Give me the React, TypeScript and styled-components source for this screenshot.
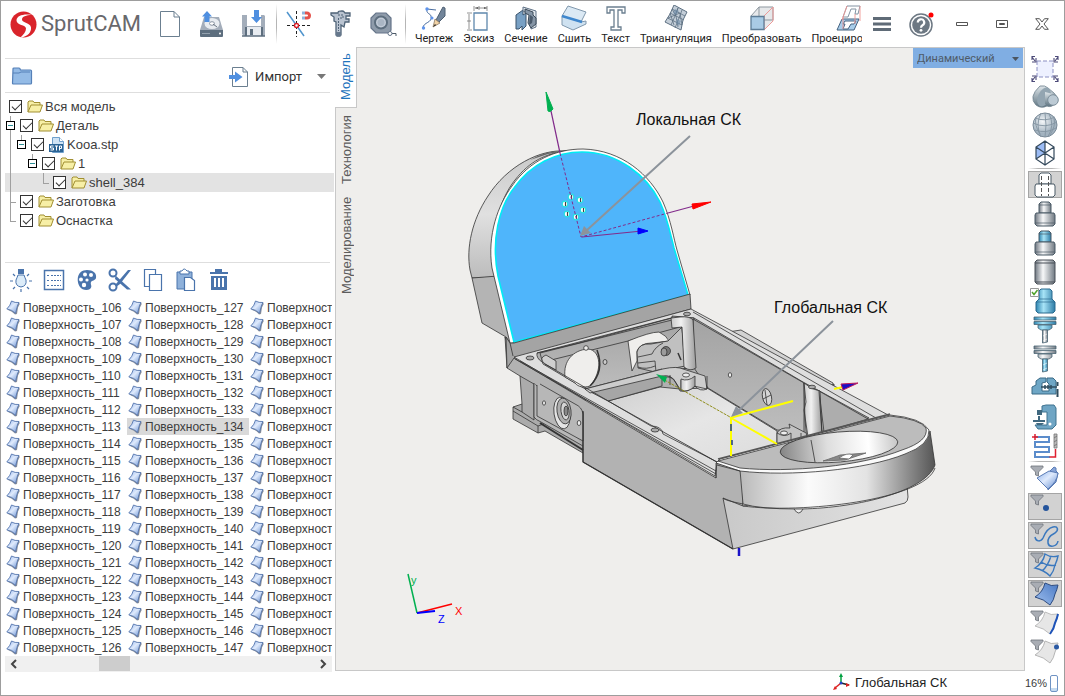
import React from 'react';
import styled, { createGlobalStyle, css } from 'styled-components';

const GlobalStyle = createGlobalStyle`
  * { box-sizing: border-box; }
  body { margin: 0; background: #fff; font-family: "Liberation Sans", Arial, sans-serif; font-size: 13px; color: #3c3c3c; }
  ul { margin: 0; padding: 0; list-style: none; }
  button, select, input { font: inherit; color: inherit; margin: 0; padding: 0; border: 0; background: none; }
  svg { display: block; flex: none; }
`;

const Window = styled.div`
  display: grid;
  grid-template-rows: 46px 1fr 24px;
  min-height: 100vh;
  border: 1px solid #9d9d9d;
  background: #fff;
`;

/* ---------- header ---------- */

const Header = styled.header`
  display: flex;
  align-items: center;
  min-width: 0;
  padding-left: 9px;
`;

const Brand = styled.div`
  display: flex;
  align-items: center;
  gap: 4px;
  width: 147px;
  flex: none;
  font-family: Roboto, "Open Sans", sans-serif;
  font-weight: 400;
  font-size: 22px;
  line-height: 28px;
  color: #68686c;
`;

const ButtonGroup = styled.div`
  display: flex;
  gap: 16px;
  flex: none;
`;

const IconButton = styled.button`
  display: flex;
  align-items: center;
  justify-content: center;
  width: 26px;
  height: 32px;
`;

const Separator = styled.div`
  flex: none;
  width: 1px;
  height: 40px;
  margin: 0 9px;
  background: linear-gradient(#fff, #b5b5b5 40%, #b5b5b5 60%, #fff);
`;

const Commands = styled.nav`
  display: flex;
  flex: 1 1 0;
  gap: 10px;
  min-width: 0;
  overflow: hidden;
`;

const CommandButton = styled.button`
  display: flex;
  flex: none;
  flex-direction: column;
  align-items: center;
  gap: 2px;
  padding-top: 2px;
  font-family: Roboto, sans-serif;
  font-size: 11px;
  line-height: 12px;
  color: #222;
  white-space: nowrap;
`;

const WindowControls = styled.div`
  display: flex;
  align-items: center;
  flex: none;
  width: 202px;
  padding-left: 8px;
`;

const ControlButton = styled.button<{ $width: number }>`
  display: flex;
  align-items: center;
  justify-content: center;
  width: ${(p) => p.$width}px;
  height: 32px;
`;

/* ---------- left panel ---------- */

const Body = styled.div`
  display: flex;
  min-width: 0;
`;

const Panel = styled.aside`
  display: flex;
  flex-direction: column;
  flex: none;
  width: 334px;
  margin-bottom: -2px;
  padding: 11px 0 0 4px;
`;

const ImportBar = styled.div`
  display: flex;
  align-items: center;
  height: 35px;
  width: 325px;
  padding: 2px 4px 0 6px;
  border: solid #dedede;
  border-width: 1px 0;
`;

const ImportButton = styled.button`
  display: flex;
  align-items: center;
  gap: 6px;
  margin-left: auto;
  margin-right: 15px;
  font-family: Roboto, sans-serif;
  font-size: 13px;
  color: #333;
`;

const Caret = styled.button`
  width: 9px;
  height: 5px;
  background: #777;
  clip-path: polygon(0 0, 100% 0, 50% 100%);
`;

const Tree = styled.ul`
  height: 169px;
  width: 329px;
  padding-top: 4px;
`;

const TreeRow = styled.li<{ $level: number; $selected?: boolean }>`
  position: relative;
  display: flex;
  align-items: center;
  height: 19px;
  padding-left: ${(p) => (p.$level === 0 ? 4 : 1 + 11 * (p.$level - 1))}px;
  background: ${(p) => (p.$selected ? '#e3e3e3' : 'transparent')};
`;

const Slot = styled.span`
  display: flex;
  align-items: center;
  width: 14px;
  height: 19px;
`;

const Expander = styled.button`
  position: relative;
  z-index: 1;
  width: 9px;
  height: 9px;
  border: 1px solid #000;
  background: linear-gradient(#2b8f96, #2b8f96) center / 5px 1px no-repeat #fff;
`;

const Guide = styled.span<{ $depth: number; $half?: boolean; $arm?: boolean }>`
  position: absolute;
  left: ${(p) => 5 + 11 * p.$depth}px;
  top: 0;
  width: ${(p) => (p.$arm ? 6 : 1)}px;
  height: ${(p) => (p.$half ? 11 : 19)}px;
  border-left: 1px solid #a0a0a0;
  ${(p) => p.$half && p.$arm && css`border-bottom: 1px solid #a0a0a0;`}
  ${(p) =>
    p.$arm &&
    !p.$half &&
    css`
      background: linear-gradient(#a0a0a0, #a0a0a0) 0 10px / 6px 1px no-repeat;
    `}
`;

const TreeLabel = styled.label`
  display: flex;
  align-items: center;
  gap: 2px;
  white-space: nowrap;
`;

const Check = styled.input`
  appearance: none;
  position: relative;
  width: 13px;
  height: 13px;
  margin-right: 3px;
  border: 1px solid #333;
  background: #fff;
  &:checked::after {
    content: '';
    position: absolute;
    left: 2px;
    top: 2px;
    width: 8px;
    height: 4px;
    border: solid #333;
    border-width: 0 0 1px 1px;
    transform: rotate(-45deg);
  }
`;

const PanelTools = styled.div`
  display: flex;
  align-items: center;
  gap: 8px;
  width: 325px;
  height: 37px;
  padding: 0 0 2px 3px;
  border-top: 1px solid #dedede;
`;

const PanelToolButton = styled.button`
  display: flex;
  align-items: center;
  justify-content: center;
  width: 25px;
  height: 25px;
`;

const SurfaceList = styled.ul`
  display: grid;
  grid-auto-flow: column;
  grid-template-rows: repeat(21, 17px);
  grid-auto-columns: 122px;
  width: 327px;
  overflow: hidden;
  font-size: 12px;
`;

const SurfaceItem = styled.li<{ $selected?: boolean }>`
  display: flex;
  align-items: center;
  gap: 2px;
  padding-left: 1px;
  white-space: nowrap;
  background: ${(p) => (p.$selected ? '#d9d9d9' : 'transparent')};
`;

const ScrollBar = styled.div`
  display: flex;
  justify-content: space-between;
  width: 327px;
  height: 16px;
  background: #f0f0f0;
`;

const ScrollButton = styled.button`
  display: flex;
  align-items: center;
  justify-content: center;
  width: 17px;
  height: 15px;
`;

const ScrollThumb = styled.div`
  width: 31px;
  height: 15px;
  margin: 0 auto 0 77px;
  background: #cdcdcd;
`;

/* ---------- workspace ---------- */

const Workspace = styled.main`
  display: flex;
  flex: 1;
  min-width: 0;
`;

const Tabs = styled.div`
  display: flex;
  flex-direction: column;
  flex: none;
  width: 22px;
  background: #efeeec;
  border-bottom: 1px solid #c8c8c8;
`;

const Tab = styled.button<{ $active?: boolean; $height: number }>`
  display: flex;
  align-items: center;
  justify-content: center;
  height: ${(p) => p.$height}px;
  width: 22px;
  writing-mode: vertical-rl;
  transform: rotate(180deg);
  font-size: 13px;
  line-height: 20px;
  white-space: nowrap;
  color: ${(p) => (p.$active ? '#1f74bd' : '#5c5c5c')};
  background: ${(p) => (p.$active ? '#fff' : 'transparent')};
  border: solid #c8c8c8;
  border-width: ${(p) => (p.$active ? '1px 0 0 1px' : '0 1px 0 0')};
`;

const TabFiller = styled.div`
  flex: 1;
  border-left: 1px solid #c8c8c8;
`;

const Canvas = styled.section`
  position: relative;
  flex: 1;
  min-width: 0;
  background: #efeeec;
  border: solid #c8c8c8;
  border-width: 1px 1px 1px 0;
`;

const Scene = styled.svg`
  width: 100%;
  height: auto;
  max-height: calc(100vh - 74px);
`;

const ModeBox = styled.div`
  position: absolute;
  top: 0;
  right: 1px;
  width: 110px;
  height: 20px;
  background: #80aee3;
  &::after {
    content: '';
    position: absolute;
    right: 4px;
    top: 9px;
    width: 7px;
    height: 4px;
    background: #4b5560;
    clip-path: polygon(0 0, 100% 0, 50% 100%);
    pointer-events: none;
  }
`;

const ModeSelect = styled.select`
  appearance: none;
  width: 100%;
  height: 20px;
  padding-left: 4px;
  font-family: Roboto, sans-serif;
  font-size: 11px;
  color: #4f5b68;
`;

const ToolColumn = styled.aside`
  display: flex;
  flex-direction: column;
  align-items: center;
  flex: none;
  width: 39px;
  padding-top: 8px;
`;

const ToolSet = styled.div<{ $gap: number }>`
  display: grid;
  gap: ${(p) => p.$gap}px;
`;

const ToolButton = styled.button<{ $pressed?: boolean }>`
  position: relative;
  display: flex;
  align-items: center;
  justify-content: center;
  width: 34px;
  height: 27px;
  border: 1px solid ${(p) => (p.$pressed ? '#a5a5a5' : 'transparent')};
  background: ${(p) => (p.$pressed ? '#d2d2d2' : 'transparent')};
`;

const ToolRule = styled.div`
  width: 34px;
  height: 1px;
  margin: 2px 0;
  background: linear-gradient(90deg, #fff, #b5b5b5 30%, #b5b5b5 70%, #fff);
`;

/* ---------- status bar ---------- */

const StatusBar = styled.footer`
  display: flex;
  align-items: center;
  justify-content: flex-end;
  padding-right: 6px;
`;

const StatusSystem = styled.span`
  display: flex;
  align-items: center;
  gap: 4px;
  margin-right: 78px;
  padding-bottom: 2px;
  color: #222;
`;

const Zoom = styled.span`
  margin-right: 3px;
  font-size: 11px;
`;

const Meter = styled.span`
  width: 8px;
  height: 17px;
  border: 1px solid #6f93c4;
  border-radius: 2px;
  background: linear-gradient(#fff 80%, #c5dbf0 80%);
`;

/* ---------- icons ---------- */

const S = ({ w = 26, h = 26, box, children }: { w?: number; h?: number; box?: string; children: React.ReactNode }) => (
  <svg width={w} height={h} viewBox={box ?? `0 0 ${w} ${h}`} fill="none" aria-hidden="true">
    {children}
  </svg>
);

const Logo = () => (
  <S w={27} h={27}>
    <circle cx="13.5" cy="13.5" r="13" fill="#d9242b" />
    <path
      d="M22 4C14 2.500 6.500 4.500 6.500 9.500c0 5 9.500 4 9.500 8 0 3.500-2.500 6-6 9.500C18 25.500 21.500 21 21 16.500 20.500 11.500 12 12 12 8.500 12 5.500 16 4 22 4Z"
      fill="#fff"
    />
  </S>
);

const NewIcon = () => (
  <S w={22} h={28}>
    <path d="M1.500 1.500H15l5.500 5.500v19.500h-19z" fill="#fff" stroke="#6b7f90" />
    <path d="M15 1.500V7h5.500" stroke="#6b7f90" />
  </S>
);

const OpenIcon = () => (
  <S w={26} h={28}>
    <path d="M5 7h15l4 13H1z" fill="#a3adba" />
    <ellipse cx="13" cy="13.500" rx="7.500" ry="5.500" fill="#e8ecf1" />
    <ellipse cx="13" cy="13.500" rx="2.500" ry="1.800" fill="#fff" stroke="#8c97a5" />
    <path d="M18 17l-4-3" stroke="#66727f" />
    <path d="M1 20h23v6a1 1 0 0 1-1 1H2a1 1 0 0 1-1-1z" fill="#5d6e7e" />
    <path d="M3 23.500h8" stroke="#93a1ae" />
    <circle cx="21" cy="23.500" r="1" fill="#fff" />
    <path d="M8 1l5 5.500h-2.500V12h-5V6.500H3z" fill="#4f8fe0" />
  </S>
);

const SaveIcon = () => (
  <S w={26} h={28}>
    <path d="M1 5h22l1 1v20H3l-2-2z" fill="#a3adba" />
    <path d="M6 5h14v11H6z" fill="#fff" />
    <path d="M6 17h14v9H6z" fill="#e8ecf1" />
    <path d="M5 17v9M21 17v9" stroke="#5d6e7e" strokeWidth="2" />
    <path d="M9 19h3v6H9z" fill="#5d6e7e" />
    <path d="M1 26h23" stroke="#5d6e7e" strokeWidth="1.500" />
    <path d="M13 0h5v7h3l-5.500 6L10 7h3z" fill="#4f8fe0" />
  </S>
);

const SnapIcon = () => (
  <S w={26} h={26}>
    <path d="M1 14.500h25M10.500 0v26" stroke="#222" strokeDasharray="3 2" />
    <path d="M1 1l17 24" stroke="#4f94cd" strokeWidth="1.500" />
    <circle cx="10.500" cy="14.500" r="2" fill="#fff" stroke="#dc1e28" strokeWidth="1.500" />
    <path d="M19 2h2a2.500 2.500 0 0 1 0 5h-2" stroke="#e4524b" strokeWidth="3" />
    <path d="M16 2h3M16 7h3" stroke="#8fb4dc" strokeWidth="3" />
  </S>
);

const CaliperIcon = () => (
  <S w={22} h={28}>
    <path
      d="M1 3h7c0-2 1-2 4-2 2 0 2 1 3 2h5v3h-4v3h3v3h-4l-1 5-3-2v10l-1 1H7l-1-1V12L4 11V7L1 5z"
      fill="#b9c3d0"
      stroke="#4f6377"
      strokeWidth="1.300"
    />
    <path d="M8.500 8v13M8 5h5v3h-3" stroke="#4f6377" strokeDasharray="2 1" />
    <path d="M6 22h5v4H6z" fill="#66788c" />
  </S>
);

const TapeIcon = () => (
  <S w={28} h={26}>
    <path d="M7 2h10l5 5v12l-2 3H7l-5-5V7z" fill="#8e9baa" stroke="#66758a" strokeWidth="1.200" />
    <circle cx="12" cy="11.500" r="6" fill="#c3ccd8" stroke="#5d6e7e" strokeWidth="2" />
    <circle cx="12" cy="11.500" r="3.500" fill="#aab6c4" />
    <path d="M22 22.500h5V25" stroke="#4d5a66" />
    <circle cx="21" cy="22.500" r="2" fill="#fff" stroke="#66758a" />
  </S>
);

const steel = '#5f7185';

const DrawIcon = () => (
  <S>
    <path d="M2 23C2 17 12 18 10 11 9 8 5 9 6 4l9 1" stroke="#4a6d9e" />
    <path d="M15 15l7-13 2 1v8l-7 7-3 3z" fill="#72859a" stroke="#4e6073" />
    <path d="M14 14l5 4-7 4z" fill="#f2d3a6" stroke="#7d6a55" strokeWidth=".7" />
    <path d="M12 22l2-3 1 1z" fill="#222" />
    <circle cx="2.500" cy="23" r="1.700" fill="#5f94ec" />
    <circle cx="6" cy="4" r="1.700" fill="#5f94ec" />
    <circle cx="11" cy="13" r="1.500" fill="#5f94ec" />
  </S>
);
const SketchIcon = () => (
  <S>
    <path d="M8 8h13v17H8z" fill="#fff" stroke="#5f88ad" strokeWidth="1.300" />
    <path d="M9 3h12M8 6V1M21 6V1M3 9v15M1 8h5M1 25h5M1 16h4M13 1v4" stroke="#777" strokeWidth=".8" />
    <path d="M9 3l3-1v2zM21 3l-3-1v2z" fill="#555" />
  </S>
);
const SectionIcon = () => (
  <S>
    <path d="M3 10l7-5v5l3-2v13l-4 4v-4l-3 3H3z" fill="#78a0c4" stroke="#3b536b" />
    <path d="M10 2l13 4v16l-5 2V10l-8-4z" fill="#e2e8ee" stroke={steel} />
    <path d="M12 4l8 3v3l3 3v6l-5 4-3-5 1-8-4-2z" fill="#8595a6" stroke="#3b4a59" />
    <path d="M17 10l3 2-1 6-3 2z" fill="#4a5a6b" />
  </S>
);
const StitchIcon = () => (
  <S>
    <path d="M7 1l18 6-5 10L1 11z" fill="#dbe9f4" stroke="#8098ad" />
    <path d="M1 11l19 6 5-1v3L12 25 1 20z" fill="#cfe2f1" stroke="#8098ad" />
    <path d="M1 11l20 6" stroke="#3f87cd" strokeWidth="2.500" />
  </S>
);
const TextIcon = () => (
  <S>
    <path d="M4 2h18v6h-3V5h-4v17h3v3H8v-3h3V5H7v3H4z" fill="#fff" stroke="#6b7f90" strokeWidth="1.300" />
  </S>
);
const MeshIcon = () => (
  <S>
    <path d="M11 0l13 7-4 8-2 10-16-8 5-8z" fill="#c4ced8" stroke="#5d7082" />
    <path
      d="M7 8l14 7M4.500 13l14.500 7M9 4l13 7M15 3l-3 8-4 9M19 5l-3 8-4 10M7 8l4 12M9 4l4 7M12 11l3-8M13 11l2 11M17 8l2 12M5 13l12-5"
      stroke="#5d7082"
      strokeWidth=".8"
    />
    <path d="M12 4l4 2-3 4-3-2zM14 14l4 2-2 5-3-3z" fill="#6d8aa6" opacity=".6" />
  </S>
);
const TransformIcon = () => (
  <S>
    <path d="M2 11l8-9h14v13l-9 10H2z" fill="#e6e8ea" />
    <path d="M2 11l8-9h14M10 2v13h14V2M10 15l-8 10" stroke="#8d979f" />
    <path d="M15 11l9-9v14l-9 9z" stroke="#ed9a98" />
    <path d="M2 11.500h13v13H2z" fill="#a9cbe5" stroke="#5d7d97" strokeWidth="1.300" />
  </S>
);
const ProjectIcon = () => (
  <S>
    <path d="M11 1h13l-2 8h-3l1-5h-5l-3 8H7z" fill="#fff" stroke="#8493a2" />
    <path d="M6 14h17l-5 11H1z" fill="#a8cdea" stroke="#446280" />
    <path d="M9 16h11l-2 3h-3l-3 5H7l2-5H7z" fill="#fff" stroke="#446280" />
    <path d="M11 1l-5 14M24 1v15M7 12v12M19 9v10" stroke="#ef9693" strokeWidth=".9" />
  </S>
);

const HelpIcon = () => (
  <S w={26} h={26}>
    <circle cx="12" cy="14" r="11" fill="#fff" stroke="#6d7883" strokeWidth="1.500" />
    <circle cx="12" cy="14" r="8.800" fill="#6d7883" />
    <path d="M8.800 11.500a3.200 3.200 0 1 1 4.700 2.800c-1 .6-1.500 1-1.500 2.400" stroke="#fff" strokeWidth="2.200" />
    <circle cx="12" cy="19.300" r="1.400" fill="#fff" />
    <circle cx="22" cy="4" r="2.500" fill="#f00" />
  </S>
);

const BlueFolder = () => (
  <S w={22} h={21}>
    <path d="M2 3q0-1 1-1h5q1 0 1.500 2l10 0q1 0 1 1v12q0 1-1 1h-17q-1 0-1-1z" fill="#94bbe6" stroke="#5580b8" strokeWidth="1.200" />
    <path d="M2 7h6l2-1h9" stroke="#5580b8" />
  </S>
);

const ImportIcon = () => (
  <S w={20} h={22}>
    <path d="M3.500 1.500H14l4.500 4.500v14.500h-15z" fill="#fff" stroke="#6b7f90" />
    <path d="M14 1.500V6h4.500" stroke="#6b7f90" />
    <path d="M0 9h6V5.500l7.500 5.500L6 16.500V13H0z" fill="#4f8fe0" />
  </S>
);

const Folder = () => (
  <S w={16} h={13}>
    <path d="M1 12V2l1-1h4l1 1.500h6V5" fill="#f7efa6" stroke="#a18f32" />
    <path d="M1 12L4 5h11.500L13 12z" fill="#f7efa6" stroke="#a18f32" />
  </S>
);

const StpIcon = () => (
  <S w={16} h={16}>
    <path d="M3.500.5h7l4 4v11h-11z" fill="#cfe3f5" stroke="#6fa0cc" />
    <path d="M10.500.5v4h4" fill="#fff" stroke="#6fa0cc" />
    <path d="M0 7h14v8H0z" fill="#2c6496" />
    <path d="M4.500 9h-3v2h3v2h-3M6 9h3M7.500 9v4.500M10.500 13.500V9h2v2.500h-2" stroke="#fff" />
  </S>
);

const blue = '#4a74ac';

const BulbIcon = () => (
  <S w={22} h={25}>
    <path d="M8 1h6v5H8z" fill={blue} />
    <path d="M8 7q-1 3-2 5-1 6 5 7 6-1 5-7-1-2-2-5z" fill="#dcecf9" stroke={blue} />
    <path d="M0 13h3M19 13h3M3 6l2 2M19 6l-2 2M3 21l2-2M19 21l-2-2M11 21v3" stroke={blue} strokeWidth="1.200" />
  </S>
);
const ListIcon = () => (
  <S w={22} h={22}>
    <path d="M1.500 1.500h19v19h-19z" stroke={blue} strokeWidth="1.500" />
    <path d="M4 6.500h2M4 11.500h2M4 16.500h2M8 6.500h10M8 11.500h10M8 16.500h10" stroke={blue} strokeDasharray="2 1" />
  </S>
);
const PaletteIcon = () => (
  <S w={22} h={22}>
    <path d="M11 1c6 0 10 3 9 8-1 3-4 2-5 4-1 3 2 4-1 7-3 2-8 1-10-2C0 12 1 1 11 1z" fill={blue} />
    <circle cx="9" cy="5.500" r="2" fill="#fff" />
    <circle cx="15" cy="6" r="2" fill="#fff" />
    <circle cx="5" cy="10.500" r="2" fill="#fff" />
    <circle cx="11" cy="11" r="1.600" fill="#fff" />
    <circle cx="8" cy="16" r="2.200" fill="#fff" />
  </S>
);
const ScissorsIcon = () => (
  <S w={24} h={24}>
    <circle cx="5" cy="5" r="3.500" stroke={blue} strokeWidth="2" />
    <circle cx="5" cy="19" r="3.500" stroke={blue} strokeWidth="2" />
    <path d="M7.500 7.500l15.500 14h-4L7 11zM7.500 16.500L20 2h3L12 16 8 19z" fill={blue} />
  </S>
);
const CopyIcon = () => (
  <S w={20} h={24}>
    <path d="M1.500 1.500h11v17h-11z" fill="#fff" stroke={blue} strokeWidth="1.200" />
    <path d="M6.500 6.500h12v16h-12z" fill="#fff" stroke={blue} strokeWidth="1.200" />
  </S>
);
const PasteIcon = () => (
  <S w={20} h={24}>
    <path d="M1 4h15v17H1z" fill="#8fb1da" stroke={blue} />
    <path d="M4 6V3h2q2-4 5 0h2v3z" fill="#fff" stroke={blue} />
    <path d="M8.500 9.500h6l4 3v10h-10z" fill="#fff" stroke={blue} strokeWidth="1.200" />
  </S>
);
const TrashIcon = () => (
  <S w={20} h={24}>
    <path d="M1 6V4h5V1h7v3h6v2z" fill={blue} />
    <path d="M2 8h16v14H2z" fill={blue} />
    <path d="M6 10v9M10 10v9M14 10v9" stroke="#fff" strokeWidth="2" />
  </S>
);

const SurfaceIcon = () => (
  <S w={15} h={16}>
    <path d="M6.500 2l7.500 1.500-2 4-1 6.500-2 .5Q6 11 2 10z" fill="#8b8f98" />
    <path d="M5.500 1Q9 3 13 2.500 11.500 5 11 7.500L9.500 13.500Q6 9.500.8 9 4.500 5.500 5.500 1Z" fill="url(#surf)" stroke="#5676ae" strokeWidth=".9" />
  </S>
);

/* ---------- view tool icons ---------- */

const FitIcon = () => (
  <S w={30} h={28}>
    <path d="M7 6h16v16H7z" fill="#eef1ff" stroke="#8b8fc2" strokeDasharray="4 2" />
    <path
      d="M5 6L2 2M2 5V1.500h3M25 6l3-4M28 5V1.500h-3M5 22l-3 4M2 23v3.500h3M25 22l3 4M28 23v3.500h-3M2 7h4V3M28 7h-4V3M2 21h4v4M28 21h-4v4"
      stroke="#4c4a78"
      strokeWidth="1.100"
    />
  </S>
);
const ShaftIcon = () => (
  <S w={28} h={24}>
    <path d="M9 1q5-1 8 2l6 5q5 5 1 10-3 5-8 3-6 3-11-1-8-8 4-19z" fill="url(#steelV)" stroke="#6c7f8c" strokeWidth=".8" />
    <ellipse cx="13" cy="12" rx="6" ry="10" transform="rotate(25 13 12)" fill="#93a5b1" />
    <path d="M14 7l8 2v12l-8-2z" fill="url(#steelV)" />
    <circle cx="22" cy="15" r="5.300" fill="#bccad4" stroke="#7b8d99" />
  </S>
);
const SphereIcon = () => (
  <S w={28} h={26}>
    <circle cx="14" cy="13" r="12" fill="url(#ball)" stroke="#7a8a98" />
    <path
      d="M2 11q12 6 24-1M4 18q11 4 21-2M4 6q10 4 20-1M10 1q-6 12 0 24M18 1.500q6 12-1 23M14 1q2 12 0 24M5 5q-2 8 4 17M23 6q2 8-4 17"
      stroke="#8394a2"
      strokeWidth=".9"
    />
  </S>
);
const CubeIcon = () => (
  <S w={24} h={26}>
    <path d="M3 7l9-6v12l-9 6z" fill="#9cbcf5" />
    <path d="M12 1l9 6v12l-9 6-9-6V7zM12 1v12M12 13l-9 6M12 13l9 6M3 7l9 6 9-6M12 13v12" stroke="#34495c" strokeWidth="1.200" />
  </S>
);

const Stack = ({ top, bottom, wire }: { top: string; bottom: string; wire?: boolean }) => (
  <S w={24} h={26}>
    <path d="M6 3l2-2h8l2 2v9H6z" fill={top} stroke="#4a5a66" />
    <path d="M3 12h18l1 2v9l-2 2H4l-2-2v-9z" fill={bottom} stroke="#4a5a66" />
    {wire ? (
      <path d="M8.500 4v20M15.500 4v20" stroke="#555" strokeDasharray="4 2" />
    ) : (
      <path d="M6 4h12M2 22h20" stroke="#4a5a66" strokeWidth=".7" />
    )}
  </S>
);
const CylinderIcon = () => (
  <S w={24} h={26}>
    <path d="M2 3l2-2h16l2 2v20l-2 2H4l-2-2z" fill="url(#steelH)" stroke="#4a5058" />
    <path d="M2 4h20M2 23h20" stroke="#4a5058" />
  </S>
);
const CheckedStack = () => (
  <S w={32} h={27}>
    <path d="M10 4l2-2h9l2 2v8l3 3v9l-2 2H9l-2-2v-9l3-3z" fill="url(#cyanH)" stroke="#2b6a8f" />
    <path d="M7 15h19M10 12h13" stroke="#2b6a8f" strokeWidth=".7" />
    <path d="M1.500 1.500h8v8h-8z" fill="#fff" stroke="#999" />
    <path d="M3 5l2 2.500L8.500 3" stroke="#4fa32a" strokeWidth="1.500" />
  </S>
);
const HolderIcon = ({ body, tip }: { body: string; tip: string }) => (
  <S w={26} h={28}>
    <path d="M2 1h22v3H2zM2 5.500h22v3H2zM6 9h14v3l-3 2H9l-3-2z" fill={body} stroke="#4a6474" strokeWidth=".8" />
    <path d="M10.500 14h5v12l-5 1z" fill={tip} stroke="#4a6474" strokeWidth=".8" />
    <path d="M11 20l4-2M11 25l4-2" stroke="#fff" strokeWidth=".6" />
  </S>
);
const ViceIcon = () => (
  <S w={28} h={22}>
    <path d="M1 17V10l4-2V4l4-3h6v4l-4 1v8h7V7l-2-2V1h6l3 3v13z" fill="#6ea6c5" stroke="#3a6a86" />
    <path d="M10 10h16M14 8v4M17 8v4M20 8v4" stroke="#2f4c5d" strokeWidth="1.500" />
    <path d="M26.500 5v4M26.500 12v8" stroke="#2f4c5d" strokeWidth="2" />
  </S>
);
const MillIcon = () => (
  <S w={26} h={26}>
    <path d="M10 2l4-1h8l2 3v17l-4 4H6l-3-4h12V8h-5z" fill="#6fa5c4" stroke="#3e728f" />
    <path d="M5 6h5v5H5zM1 16h12v2H1zM6 12h2v4H6z" fill="#40687f" />
    <circle cx="18" cy="20" r="1.500" fill="#fff" />
    <path d="M4 19h8l-2 2H5z" fill="#40687f" />
  </S>
);
const PathIcon = () => (
  <S w={28} h={26}>
    <path d="M3 4h15v5H4v5h14v5H4v5h15" stroke="#5b8ccb" strokeWidth="2" />
    <path d="M1 4h6M4 1v6M24.500 16v8h-6" stroke="#df1f2f" strokeWidth="1.500" />
    <path d="M23 1h3v14h-3z" fill="#bbb" stroke="#777" strokeWidth=".8" />
    <path d="M23 5l3-2M23 9l3-2M23 13l3-2" stroke="#777" />
  </S>
);

const Funnel = () => <path d="M1 1h12v1.500L8.500 7v4l-3-1V7L1 2.500z" fill="#a9adb4" stroke="#6d727a" strokeWidth=".8" />;
const sheet = 'M15 2q6 4 13 2-1 5-3 9-1 6-5 11-6-6-15-8 8-5 10-14z';

const FilterIcon = ({ kind }: { kind: 'solid' | 'point' | 'curve' | 'grid' | 'face' | 'edge' | 'vertex' }) => (
  <S w={30} h={26}>
    {kind === 'solid' && (
      <>
        <path d="M17 9l7-7 2 1v3l2 2-2 9-8 8z" fill="#88a5d8" stroke="#5b7cb5" />
        <path d="M7 13l12-7 9 2q-1 9-10 16z" fill="url(#surf)" stroke="#5b7cb5" />
      </>
    )}
    {kind === 'point' && <circle cx="16" cy="14" r="3" fill="#24549c" />}
    {kind === 'curve' && (
      <path d="M5 14c1 5 6 5 8 1 2-5 5-10 10-11 5-1 6 3 2 6-4 2-8 5-7 10 1 5 9 4 10-2" stroke="#3a78be" strokeWidth="1.500" />
    )}
    {kind === 'grid' && (
      <path d={`${sheet}M21 4q-3 10-9 15M11 10q8 5 15 3`} stroke="#3a78be" strokeWidth="1.400" />
    )}
    {kind === 'face' && <path d={sheet} fill="url(#face)" stroke="#2b4a80" />}
    {kind === 'edge' && (
      <>
        <path d={sheet} fill="#e6e6e6" stroke="#bbb" />
        <path d="M28 4q-1 5-3 9-1 6-5 11" stroke="#1e53b8" strokeWidth="2" />
      </>
    )}
    {kind === 'vertex' && (
      <>
        <path d={sheet} fill="#e6e6e6" stroke="#b5b5b5" />
        <circle cx="26.500" cy="8" r="2.500" fill="#2b5aa4" />
      </>
    )}
    <Funnel />
  </S>
);

/* ---------- shared gradients ---------- */

const Gradients = () => (
  <defs>
    <linearGradient id="surf" x1="0" y1="0" x2="1" y2="1">
      <stop offset="0" stopColor="#8fb2ec" />
      <stop offset=".45" stopColor="#dfeafc" />
      <stop offset="1" stopColor="#5f8ad0" />
    </linearGradient>
    <linearGradient id="face" x1="0" y1="1" x2="1" y2="0">
      <stop offset="0" stopColor="#9fc0ef" />
      <stop offset="1" stopColor="#4a79c3" />
    </linearGradient>
    <linearGradient id="steelH">
      <stop offset="0" stopColor="#6e7680" />
      <stop offset=".4" stopColor="#f7f8f9" />
      <stop offset="1" stopColor="#707982" />
    </linearGradient>
    <linearGradient id="cyanH">
      <stop offset="0" stopColor="#2c84b0" />
      <stop offset=".4" stopColor="#a8e4f7" />
      <stop offset="1" stopColor="#2c7ba6" />
    </linearGradient>
    <linearGradient id="steelV" x2="0" y2="1">
      <stop offset="0" stopColor="#dfe6ea" />
      <stop offset="1" stopColor="#5f7582" />
    </linearGradient>
    <radialGradient id="ball" cx=".4" cy=".35">
      <stop offset="0" stopColor="#f4f7f9" />
      <stop offset="1" stopColor="#a2b2bf" />
    </radialGradient>
    <linearGradient id="domeSide" x1="0" y1="0" x2="0" y2="1">
      <stop offset="0" stopColor="#c9c9c9" />
      <stop offset=".5" stopColor="#e0e0e0" />
      <stop offset="1" stopColor="#bcbcbc" />
    </linearGradient>
    <linearGradient id="ringSide">
      <stop offset="0" stopColor="#b9b9b9" />
      <stop offset=".35" stopColor="#fbfbfb" />
      <stop offset=".65" stopColor="#e3e3e3" />
      <stop offset=".88" stopColor="#858585" />
      <stop offset="1" stopColor="#555" />
    </linearGradient>
    <linearGradient id="ringHole">
      <stop offset="0" stopColor="#858585" />
      <stop offset=".4" stopColor="#dedede" />
      <stop offset=".75" stopColor="#fff" />
      <stop offset="1" stopColor="#c6c6c6" />
    </linearGradient>
    <linearGradient id="wall" x2="0" y2="1">
      <stop offset="0" stopColor="#a3a3a3" />
      <stop offset="1" stopColor="#bdbdbd" />
    </linearGradient>
    <linearGradient id="floor" x2="1" y2="1">
      <stop offset="0" stopColor="#d0d0d0" />
      <stop offset=".5" stopColor="#e6e6e6" />
      <stop offset="1" stopColor="#dcdcdc" />
    </linearGradient>
    <linearGradient id="post">
      <stop offset="0" stopColor="#c9c9c9" />
      <stop offset=".4" stopColor="#f1f1f1" />
      <stop offset="1" stopColor="#9d9d9d" />
    </linearGradient>
    <linearGradient id="front" x2="1" y2="0">
      <stop offset="0" stopColor="#c9c9c9" />
      <stop offset="1" stopColor="#e2e2e2" />
    </linearGradient>
  </defs>
);

/* ---------- 3D scene ---------- */

const Part = () => (
  <g stroke="#333" strokeWidth=".8" strokeLinejoin="round" fill="none">
    {/* dome side */}
    <path d="M566 151C540 149 507 166 488 196C472 220 466 248 470 270L472 278L497 277C489 235 499 200 515 180C530 161 545 154 566 151Z" fill="url(#domeSide)" />
    <path d="M472 278L482 323L506 337L510 343L514 343L498 276Z" fill="#b4b4b4" />
    <path d="M566 151Q546 150 530 160L548 154Z" fill="#666" stroke="none" />
    {/* dome rim and highlighted face */}
    <path d="M510 343L492 268C487 235 498 205 512 186C530 160 556 149 583 149C622 150 650 175 663 202C671 220 674 240 677 250L690 295" fill="#fff" />
    <path d="M514 342L498 276C491 240 499 207 514 188C531 164 556 152 582 152C618 152 647 176 660 202C667 217 670 232 674 248L688 295Z" fill="#4fb5fb" stroke="#00ecf4" strokeWidth="1.600" />
    {[[571, 197], [580, 200], [565, 204], [583, 210], [567, 214], [576, 217]].map(([x, y]) => (
      <g key={`${x}-${y}`}>
        <circle cx={x} cy={y} r="2.800" fill="#fff" stroke="#25dfe2" strokeWidth="1.200" />
        <path d={`M${x + 0.5} ${y - 2}v4`} stroke="#444" strokeWidth="1.200" />
      </g>
    ))}
    {/* back plate beside the box */}
    <path d="M728 332L741 330L833 383V393L818 388Z" fill="#d2d2d2" />
    <path d="M827 388L834 384V394" fill="#999" />
    {/* box front face and feet */}
    <path d="M520 376L522 404L513 407V419L538 433L545 431L583 453L586 380Z" fill="#ababab" />
    <path d="M513 407L522 412L522 404M513 411L538 426L546 423M522 412L534 420V382M538 426V433" />
    <path d="M505 337L507 368L520 376L583 412V462L733 549L743 503V470L716 463V478L514 358Z" fill="#b2b2b2" />
    <path d="M534 383V417Q536 420 541 422L583 446M537 385V416L583 441V414Q582 407 575 404L540 384" fill="#b7b7b7" />
    <path d="M540 423L583 450" strokeWidth="2" />
    <path d="M583 411V462L733 549" strokeWidth="1.200" />
    <ellipse cx="562" cy="413" rx="8" ry="16" transform="rotate(-8 562 413)" fill="#e4e4e4" />
    <ellipse cx="564" cy="411" rx="7" ry="13" transform="rotate(-8 564 411)" fill="#b0b0b0" />
    <ellipse cx="565" cy="411" rx="4" ry="9" transform="rotate(-8 565 411)" fill="#d5d5d5" />
    <ellipse cx="566" cy="411" rx="2" ry="5" fill="#888" />
    <ellipse cx="544" cy="403" rx="1.500" ry="2.200" fill="#eee" />
    <ellipse cx="579" cy="423" rx="1.800" ry="2.500" fill="#eee" />
    {/* hinge slab */}
    <path d="M506 337L510 343L514 343L690 294L691 309L514 358L507 368Z" fill="#a4a4a4" />
    <path d="M510 343L513 356" />
    {/* top rim */}
    <path d="M514 357L691 309L890 416L717 463L715 476Z" fill="#dedede" />
    {/* interior walls */}
    <path d="M537 353L671 318L680 317L694 318L803 382L869 418L785 442L717 462L542 362Q536 358 537 353Z" fill="#b0b0b0" />
    <path d="M540 353L672 320V316L694 318V368L662 370L587 390L543 364Z" fill="url(#wall)" />
    <path d="M693 319L804 383V432L777 430L708 388L694 368Z" fill="url(#wall)" />
    <path d="M819 391L868 419L824 432Z" fill="#adadad" />
    {/* rear wall cut-outs */}
    <path d="M537 353L579 343L672 318M543 362L628 341L680 327" />
    <path d="M545 364Q538 358 546 355L556 361V370Z" fill="#cfcfcf" />
    <path d="M565 377C563 361 573 350 588 349C601 350 603 371 590 386C584 388 578 387 575 383Z" fill="#efeeec" />
    <path d="M597 350Q605 371 590 386" strokeWidth="1.500" />
    <path d="M628 341Q650 332 659 332Q667 336 669 341L652 343Q640 343 637 351V361L632 371Z" fill="#efeeec" />
    <path d="M637 352Q639 343 651 344L668 341L682 327L685 366L655 372L638 368Z" fill="#c0c0c0" />
    <path d="M638 357L652 354Q655 347 663 343M638 363L655 361L656 372M638 367Q646 370 655 366M682 327L685 369" />
    <ellipse cx="666" cy="351" rx="4.500" ry="4.500" fill="#777" />
    <ellipse cx="664" cy="352" rx="3" ry="4" fill="#9b9b9b" />
    <path d="M678 353l3 7" strokeWidth="1.500" />
    <circle cx="586" cy="348" r="2.300" fill="#efeeec" />
    <ellipse cx="605" cy="362" rx="2" ry="2.500" fill="#ccc" />
    <path d="M671 318L680 317Q690 316 693 320L696 368Q690 372 684 367L682 327L672 328Z" fill="url(#post)" />
    <ellipse cx="730" cy="375" rx="1.700" ry="2.300" fill="#eee" />
    <ellipse cx="767" cy="397" rx="4.500" ry="8.500" transform="rotate(-12 767 397)" fill="#d5d5d5" />
    <path d="M765 390l2 15M763 399l8-4" />
    {/* floor */}
    <path d="M608 401L660 387L680 389L707 388L777 431V447L717 462Z" fill="url(#floor)" />
    <path d="M585 389L662 369V386L608 401Z" fill="#a6a6a6" />
    <path d="M585 389L655 371Q672 366 680 368L705 376L707 389Q700 392 695 386Q688 393 680 389L676 383Q672 374 662 376L590 393Z" fill="#cdcdcd" />
    <path d="M660 378Q672 374 676 383L680 391Q688 393 694 386L707 389V376M681 380V391M694 377V386M670 375V385" />
    <path d="M681 379Q688 382 695 376L695 386Q688 393 681 390Z" fill="url(#post)" />
    <ellipse cx="686" cy="375" rx="3.500" ry="2" fill="#eee" />
    <path d="M777 433Q780 427 790 428L789 424L808 434V442L777 448Z" fill="#c3c3c3" />
    <path d="M777 433Q785 438 791 433V444M801 433V440" />
    <ellipse cx="784" cy="433" rx="3.500" ry="2" fill="#eee" />
    {/* right post */}
    <path d="M804 383Q812 390 820 391L822 434L807 440L805 420Z" fill="url(#post)" />
    <path d="M804 383L806 402L804 410L808 437M819 391L822 434" />
    {/* rim details */}
    <path d="M515 359L716 474M520 361L716 471M545 364L651 426Q662 426 663 434L717 462M693 312L876 418" />
    <ellipse cx="530" cy="358" rx="4" ry="2" fill="#aaa" />
    <ellipse cx="687" cy="314" rx="3.500" ry="1.800" fill="#aaa" />
    <ellipse cx="655" cy="430" rx="4" ry="2" fill="#aaa" />
    <ellipse cx="812" cy="387" rx="3.500" ry="1.800" fill="#aaa" />
    {/* lower front block */}
    <path d="M723 498L733 549L905 503Q908 501 908 497L907 485L743 506Z" fill="url(#front)" />
    <path d="M794 509Q799 517 803 509" fill="#eee" />
    {/* ring */}
    <path d="M740 470C790 478 885 464 912 449Q930 440 930 431L935 465C925 493 850 509 797 509Q760 509 743 504Z" fill="url(#ringSide)" />
    <path d="M743 504Q723 500 723 498M743 506C800 514 925 500 935 468" />
    <path d="M716 463L720 459L890 415Q922 418 929 430Q930 445 905 454C866 470 790 477 740 471Z" fill="#fafafa" />
    <path d="M718 461L890 416Q920 419 926 428Q929 441 902 450C862 466 790 473 740 468Z" fill="#bcbcbc" />
    <path d="M718 459L890 414" strokeWidth="1.500" stroke="#555" />
    <ellipse cx="839" cy="447" rx="59" ry="15" transform="rotate(-5 839 447)" fill="url(#ringHole)" />
    <path d="M811 440L815 462" />
    <path d="M823 461Q835 457 840 455L866 453L845 460Z" fill="#888" stroke="#666" />
    <path d="M839 458q8-6 14-3l-4 4z" fill="#fff" stroke="#666" />
    <path d="M716 463V478M717 465L740 471" />
  </g>
);

const Axes = () => (
  <g fill="none">
    {/* local system */}
    <path d="M551 111L560 153M668 213L694 206M582 237L642 231" stroke="#822b8b" strokeWidth="1.200" />
    <path d="M560 153L581 237L668 213" stroke="#822b8b" strokeDasharray="3 2" />
    <path d="M546 92L553 109Q550 113 548 111Z" fill="#00b050" stroke="#00b050" />
    <path d="M711 202L693 209L692 204Z" fill="#f00" stroke="#f00" />
    <path d="M648 231L638 228V234Z" fill="#00f" stroke="#00f" />
    {/* global system */}
    <path d="M661 378L730 417" stroke="#908e1c" strokeDasharray="3 1" />
    <path d="M656 374L667 377L665 383Z" fill="#00b050" />
    <path d="M731 417V456M730 418L793 401M731 418L777 444" stroke="#ff0" strokeWidth="2" />
    <path d="M731 424V431M732 440V445" stroke="#183b8f" strokeWidth="1.500" />
    <path d="M834 389L843 387" stroke="#ff0" strokeWidth="2" />
    <path d="M858 383L841 384L843 390Z" fill="#1c0fc4" stroke="#c01d5b" />
    <path d="M739 548V556" stroke="#1b12c8" strokeWidth="2.500" />
    {/* callout arrows */}
    <path d="M690 136L586 231M833 321L738 411" stroke="#8c939b" strokeWidth="2" />
    <path d="M580 236L584 226L591 233ZM731 417L736 406L743 413Z" fill="#8c939b" />
    {/* orientation triad */}
    <path d="M408 574L417 613" stroke="#00b050" strokeWidth="1.500" />
    <path d="M417 613L452 604" stroke="#f00" strokeWidth="1.500" />
    <path d="M417 613L435 611" stroke="#00f" strokeWidth="2" />
  </g>
);

const SceneText = styled.text<{ $size: number }>`
  font-family: "Liberation Sans", Arial, sans-serif;
  font-size: ${(p) => p.$size}px;
`;

/* ---------- data ---------- */

const commands: [string, React.FC][] = [
  ['Чертеж', DrawIcon],
  ['Эскиз', SketchIcon],
  ['Сечение', SectionIcon],
  ['Сшить', StitchIcon],
  ['Текст', TextIcon],
  ['Триангуляция', MeshIcon],
  ['Преобразовать', TransformIcon],
  ['Проецировать', ProjectIcon],
];

const panelTools: [string, React.FC][] = [
  ['Подсветка', BulbIcon],
  ['Свойства', ListIcon],
  ['Цвет', PaletteIcon],
  ['Вырезать', ScissorsIcon],
  ['Копировать', CopyIcon],
  ['Вставить', PasteIcon],
  ['Удалить', TrashIcon],
];

type Node = { name: string; level: number; open?: boolean; file?: boolean; selected?: boolean; guides?: React.ReactNode };

const nodes: Node[] = [
  { name: 'Вся модель', level: 0 },
  { name: 'Деталь', level: 1, open: true, guides: <Guide $depth={0} /> },
  { name: 'Kooa.stp', level: 2, open: true, file: true, guides: <><Guide $depth={0} /><Guide $depth={1} $half /></> },
  { name: '1', level: 3, open: true, guides: <><Guide $depth={0} /><Guide $depth={2} $half /></> },
  { name: 'shell_384', level: 4, selected: true, guides: <><Guide $depth={0} /><Guide $depth={3} $half $arm /></> },
  { name: 'Заготовка', level: 1, guides: <Guide $depth={0} $arm /> },
  { name: 'Оснастка', level: 1, guides: <Guide $depth={0} $half $arm /> },
];

const surfaces = Array.from({ length: 63 }, (_, i) => 106 + i);

type Tool = { name: string; icon: React.ReactNode; pressed?: boolean };

const viewTools: Tool[] = [
  { name: 'Показать всё', icon: <FitIcon /> },
  { name: 'Тонирование', icon: <ShaftIcon /> },
  { name: 'Сетка', icon: <SphereIcon /> },
  { name: 'Виды', icon: <CubeIcon /> },
];

const showTools: Tool[] = [
  { name: 'Каркас', icon: <Stack top="#fff" bottom="#fff" wire />, pressed: true },
  { name: 'Деталь', icon: <Stack top="url(#steelH)" bottom="url(#steelH)" /> },
  { name: 'Обработка', icon: <Stack top="url(#cyanH)" bottom="url(#steelH)" /> },
  { name: 'Заготовка', icon: <CylinderIcon /> },
  { name: 'Результат', icon: <CheckedStack /> },
  { name: 'Патрон', icon: <HolderIcon body="url(#cyanH)" tip="url(#steelH)" /> },
  { name: 'Инструмент', icon: <HolderIcon body="url(#steelH)" tip="url(#cyanH)" /> },
  { name: 'Оснастка', icon: <ViceIcon /> },
  { name: 'Станок', icon: <MillIcon /> },
  { name: 'Траектория', icon: <PathIcon /> },
];

const filterTools: Tool[] = [
  { name: 'Фильтр тел', icon: <FilterIcon kind="solid" /> },
  { name: 'Фильтр точек', icon: <FilterIcon kind="point" />, pressed: true },
  { name: 'Фильтр кривых', icon: <FilterIcon kind="curve" />, pressed: true },
  { name: 'Фильтр сеток', icon: <FilterIcon kind="grid" />, pressed: true },
  { name: 'Фильтр граней', icon: <FilterIcon kind="face" />, pressed: true },
  { name: 'Фильтр рёбер', icon: <FilterIcon kind="edge" /> },
  { name: 'Фильтр вершин', icon: <FilterIcon kind="vertex" /> },
];

const Tools = ({ items, gap }: { items: Tool[]; gap: number }) => (
  <ToolSet $gap={gap}>
    {items.map((t) => (
      <ToolButton key={t.name} aria-label={t.name} aria-pressed={!!t.pressed} $pressed={t.pressed}>
        {t.icon}
      </ToolButton>
    ))}
  </ToolSet>
);

export default function App() {
  return (
    <Window>
      <GlobalStyle />
      <Header>
        <Brand>
          <Logo />
          SprutCAM
        </Brand>
        <ButtonGroup>
          <IconButton aria-label="Новый"><NewIcon /></IconButton>
          <IconButton aria-label="Открыть"><OpenIcon /></IconButton>
          <IconButton aria-label="Сохранить"><SaveIcon /></IconButton>
        </ButtonGroup>
        <Separator />
        <ButtonGroup>
          <IconButton aria-label="Привязка"><SnapIcon /></IconButton>
          <IconButton aria-label="Измерить"><CaliperIcon /></IconButton>
          <IconButton aria-label="Рулетка"><TapeIcon /></IconButton>
        </ButtonGroup>
        <Separator />
        <Commands>
          {commands.map(([name, Icon]) => (
            <CommandButton key={name}>
              <Icon />
              {name}
            </CommandButton>
          ))}
        </Commands>
        <WindowControls>
          <ControlButton $width={24} aria-label="Меню">
            <S w={18} h={14}>
              <path d="M0 1.500h18M0 7h18M0 12.500h18" stroke="#5f6b77" strokeWidth="3" />
            </S>
          </ControlButton>
          <ControlButton $width={56} aria-label="Справка"><HelpIcon /></ControlButton>
          <ControlButton $width={24} aria-label="Свернуть">
            <S w={13} h={5}><path d="M.5.500h11v3H.5z" fill="#fff" stroke="#555" /></S>
          </ControlButton>
          <ControlButton $width={56} aria-label="Развернуть">
            <S w={13} h={9}><path d="M.5.500h11v7H.5zM3.500 3.500h5v1h-5z" stroke="#555" /></S>
          </ControlButton>
          <ControlButton $width={24} aria-label="Закрыть">
            <S w={14} h={12}>
              <path d="M.7.700h3.800L7 4l2.500-3.300h3.800L9 6l4.300 5.300H9.500L7 8l-2.500 3.300H.7L5 6z" fill="#fff" stroke="#555" />
            </S>
          </ControlButton>
        </WindowControls>
      </Header>

      <Body>
        <Panel>
          <ImportBar>
            <BlueFolder />
            <ImportButton>
              <ImportIcon />
              Импорт
            </ImportButton>
            <Caret aria-label="Варианты импорта" />
          </ImportBar>
          <Tree>
            {nodes.map((n) => (
              <TreeRow key={n.name} $level={n.level} $selected={n.selected}>
                {n.guides}
                {n.level > 0 && <Slot>{n.open && <Expander aria-label={`Свернуть ${n.name}`} />}</Slot>}
                <TreeLabel>
                  <Check type="checkbox" defaultChecked />
                  {n.file ? <StpIcon /> : <Folder />}
                  {n.name}
                </TreeLabel>
              </TreeRow>
            ))}
          </Tree>
          <PanelTools>
            {panelTools.map(([name, Icon]) => (
              <PanelToolButton key={name} aria-label={name}>
                <Icon />
              </PanelToolButton>
            ))}
          </PanelTools>
          <SurfaceList>
            {surfaces.map((n) => (
              <SurfaceItem key={n} $selected={n === 134}>
                <SurfaceIcon />
                {`Поверхность_${n}`}
              </SurfaceItem>
            ))}
          </SurfaceList>
          <ScrollBar>
            <ScrollButton aria-label="Прокрутить влево">
              <S w={7} h={10}><path d="M6 1L2 5l4 4" stroke="#444" strokeWidth="2" /></S>
            </ScrollButton>
            <ScrollThumb />
            <ScrollButton aria-label="Прокрутить вправо">
              <S w={7} h={10}><path d="M1 1l4 4-4 4" stroke="#444" strokeWidth="2" /></S>
            </ScrollButton>
          </ScrollBar>
        </Panel>

        <Workspace>
          <Tabs>
            <Tab $active $height={61}>Модель</Tab>
            <Tab $height={84}>Технология</Tab>
            <Tab $height={106}>Моделирование</Tab>
            <TabFiller />
          </Tabs>
          <Canvas>
            <Scene viewBox="357 48 667 622" preserveAspectRatio="xMidYMid meet">
              <Gradients />
              <Part />
              <Axes />
              <SceneText $size={16} x="636" y="125" fill="#111">Локальная СК</SceneText>
              <SceneText $size={16} x="774" y="313" fill="#111">Глобальная СК</SceneText>
              <SceneText $size={11} x="411" y="584" fill="#00b050">y</SceneText>
              <SceneText $size={11} x="455" y="615" fill="#f00">X</SceneText>
              <SceneText $size={11} x="438" y="623" fill="#00f">Z</SceneText>
            </Scene>
            <ModeBox>
              <ModeSelect aria-label="Режим вида" defaultValue="dynamic">
                <option value="dynamic">Динамический</option>
              </ModeSelect>
            </ModeBox>
          </Canvas>
        </Workspace>

        <ToolColumn>
          <Tools items={viewTools} gap={1} />
          <ToolRule />
          <Tools items={showTools} gap={2} />
          <ToolRule />
          <Tools items={filterTools} gap={2} />
        </ToolColumn>
      </Body>

      <StatusBar>
        <StatusSystem>
          <S w={18} h={18}>
            <path d="M8 10V3" stroke="#00a040" strokeWidth="1.500" />
            <path d="M8 10l-6 5" stroke="#d22" strokeWidth="1.500" />
            <path d="M8 10l8 2" stroke="#222" strokeWidth="1.500" />
            <path d="M8 0l2 4H6z" fill="#00a040" />
            <path d="M0 17l2-4 2 3z" fill="#d22" />
            <path d="M17 12l-4-2v4z" fill="#d22" />
            <circle cx="8" cy="10" r="1.500" fill="#24c" />
          </S>
          Глобальная СК
        </StatusSystem>
        <Zoom>16%</Zoom>
        <Meter />
      </StatusBar>
    </Window>
  );
}
